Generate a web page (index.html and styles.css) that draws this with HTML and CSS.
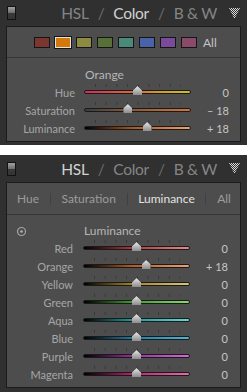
FILE: index.html
```html
<!DOCTYPE html>
<html>
<head>
<meta charset="utf-8">
<link rel="stylesheet" href="styles.css">
</head>
<body>
<section class="panel panel-color">
  <header class="ph">
    <span class="toggle"></span>
    <nav class="modes">
      <span class="mode">HSL</span><span class="slash">/</span><span class="mode on">Color</span><span class="slash">/</span><span class="mode">B &amp; W</span>
    </nav>
    <svg class="tri" width="11" height="11" viewBox="0 0 11 11"><defs><pattern id="dotsA" width="2" height="2" patternUnits="userSpaceOnUse"><rect width="1" height="1" fill="#dcdcdc"/><rect x="1" y="1" width="1" height="1" fill="#dcdcdc"/></pattern></defs><polygon points="0,0 11,0 5.5,11" fill="url(#dotsA)"/></svg>
  </header>
  <div class="box">
    <div class="swatches">
      <span class="sw sw-red"></span>
      <span class="sw sw-orange sel"></span>
      <span class="sw sw-yellow"></span>
      <span class="sw sw-green"></span>
      <span class="sw sw-aqua"></span>
      <span class="sw sw-blue"></span>
      <span class="sw sw-purple"></span>
      <span class="sw sw-magenta"></span>
      <span class="all">All</span>
    </div>
    <div class="sliders s1">
      <div class="sect"><span></span><span class="sect-t">Orange</span></div>
      <div class="row"><span class="lbl">Hue</span><div class="track t-hue"><span class="thumb" style="--v:0"></span></div><span class="val">0</span></div>
      <div class="row"><span class="lbl">Saturation</span><div class="track t-sat"><span class="thumb" style="--v:-18"></span></div><span class="val">– 18</span></div>
      <div class="row"><span class="lbl">Luminance</span><div class="track t-lum"><span class="thumb" style="--v:18"></span></div><span class="val">+ 18</span></div>
    </div>
  </div>
</section>

<section class="panel panel-lum">
  <header class="ph">
    <span class="toggle"></span>
    <nav class="modes">
      <span class="mode on">HSL</span><span class="slash">/</span><span class="mode">Color</span><span class="slash">/</span><span class="mode">B &amp; W</span>
    </nav>
    <svg class="tri" width="11" height="11" viewBox="0 0 11 11"><defs><pattern id="dotsB" width="2" height="2" patternUnits="userSpaceOnUse"><rect width="1" height="1" fill="#dcdcdc"/><rect x="1" y="1" width="1" height="1" fill="#dcdcdc"/></pattern></defs><polygon points="0,0 11,0 5.5,11" fill="url(#dotsB)"/></svg>
  </header>
  <div class="box">
    <div class="tabs">
      <span>Hue</span><span class="sep"></span><span>Saturation</span><span class="sep"></span><span class="on">Luminance</span><span class="sep"></span><span>All</span>
    </div>
    <div class="sliders s2">
      <div class="sect"><svg class="target" width="11" height="11" viewBox="0 0 11 11"><circle cx="5.5" cy="5.5" r="4" fill="none" stroke="#a4a4a4" stroke-width="1.2"/><circle cx="5.5" cy="5.5" r="1.3" fill="#b4b4b4"/></svg><span class="sect-t">Luminance</span></div>
      <div class="row"><span class="lbl">Red</span><div class="track l-red"><span class="thumb" style="--v:0"></span></div><span class="val">0</span></div>
      <div class="row"><span class="lbl">Orange</span><div class="track l-orange"><span class="thumb" style="--v:18"></span></div><span class="val">+ 18</span></div>
      <div class="row"><span class="lbl">Yellow</span><div class="track l-yellow"><span class="thumb" style="--v:0"></span></div><span class="val">0</span></div>
      <div class="row"><span class="lbl">Green</span><div class="track l-green"><span class="thumb" style="--v:0"></span></div><span class="val">0</span></div>
      <div class="row"><span class="lbl">Aqua</span><div class="track l-aqua"><span class="thumb" style="--v:0"></span></div><span class="val">0</span></div>
      <div class="row"><span class="lbl">Blue</span><div class="track l-blue"><span class="thumb" style="--v:0"></span></div><span class="val">0</span></div>
      <div class="row"><span class="lbl">Purple</span><div class="track l-purple"><span class="thumb" style="--v:0"></span></div><span class="val">0</span></div>
      <div class="row"><span class="lbl">Magenta</span><div class="track l-magenta"><span class="thumb" style="--v:0"></span></div><span class="val">0</span></div>
    </div>
  </div>
</section>
</body>
</html>
```

FILE: styles.css
```css
* { box-sizing: border-box; margin: 0; padding: 0; }
html, body { background: #ffffff; }
body { width: 247px; font-family: Lato, "Open Sans", sans-serif; }

.panel { background: #303030; padding: 0 6px 3px; }
.panel-lum { margin-top: 10px; padding-bottom: 4px; }

.ph { height: 26px; display: flex; align-items: center; }
.panel-lum .ph { height: 27px; }

.toggle {
  width: 9px; height: 14px; margin-left: 1px;
  border: 1px solid #121212;
  background: linear-gradient(#a0a0a0 0, #6c6c6c 50%, #3a3a3a 50%, #343434 100%);
}

.modes {
  margin-left: auto; display: flex; align-items: center; gap: 9px;
  font-size: 15.5px; color: #858585; letter-spacing: -0.3px;
}
.modes .on { color: #d2d2d2; }
.modes .slash { color: #6a6a6a; }

.tri { margin-left: 12px; margin-right: 1px; }

.box { background: #4d4d4d; border: 1px solid #1b1b1b; }

.swatches {
  height: 31px; display: flex; align-items: center; gap: 5px;
  padding-left: 27px; border-bottom: 1px solid #353535;
}
.sw { width: 16px; height: 11px; border: 1px solid #151515; }
.sw.sel { border-color: #e2e2e2; box-shadow: 0 0 0 1px #151515; }
.sw-red { background: #7b3630; }
.sw-orange { background: #d4780c; }
.sw-yellow { background: #8d8a42; }
.sw-green { background: #596f38; }
.sw-aqua { background: #4a8a79; }
.sw-blue { background: #4a63a8; }
.sw-purple { background: #7a4a9b; }
.sw-magenta { background: #8a4a6a; }
.all { margin-left: 1px; font-size: 12px; color: #c4c4c4; }

.tabs {
  height: 32px; display: flex; align-items: center; justify-content: space-between;
  padding: 0 9px 0 10px; border-bottom: 1px solid #353535;
  font-size: 12px; color: #9c9c9c;
}
.tabs .on { color: #e2e2e2; }
.tabs .sep { width: 1px; height: 12px; background: #404040; }

.sliders { padding: 7px 0 4px; }
.sliders.s2 { padding-top: 6px; }

.sect, .row {
  display: grid; grid-template-columns: 68px 107px 1fr; column-gap: 9px;
  align-items: center; height: 18px; padding-right: 11px;
}
.s2 .sect, .s2 .row { grid-template-columns: 66px 107px 1fr; column-gap: 10px; padding-right: 12px; }

.sect-t { font-size: 12px; color: #b6b6b6; padding-left: 1px; }
.s2 .sect-t { padding-left: 1px; }
.target { margin-left: 9px; margin-top: 3px; }

.lbl { text-align: right; font-size: 11px; color: #a6a6a6; }
.val { text-align: right; font-size: 11px; color: #c6c6c6; }

.track {
  position: relative; height: 4px; border: 1px solid #1a1a1a; border-radius: 2px;
}
.track::before {
  content: ""; position: absolute; left: 9.7px; top: -7px; width: 86.6px; height: 3px;
  background: linear-gradient(to right, #383838 1px, transparent 1px) 0 0 / 10.7px 100% repeat-x;
}
.thumb {
  position: absolute; top: -5px; width: 9px; height: 9px;
  left: calc(50% - 4.5px + var(--v) * 0.535px);
  filter: drop-shadow(0 0 0.6px #111) drop-shadow(0 0.5px 0.5px rgba(0,0,0,0.5));
}
.thumb::before {
  content: ""; display: block; width: 9px; height: 9px;
  clip-path: polygon(50% 0, 100% 48%, 100% 100%, 0 100%, 0 48%);
  background: linear-gradient(#ececec, #b4b4b4 55%, #8c8c8c);
}

.t-hue { background: linear-gradient(to right, #d42a62, #de6a36 48%, #d49a2a 70%, #c8c420); }
.t-sat { background: linear-gradient(to right, #3c3c3c, #8e5a3a 45%, #d07638); }
.t-lum { background: linear-gradient(to right, #000, #a8561e 45%, #f0a070); }

.l-red { background: linear-gradient(to right, #000, #a83838 45%, #e48a8a); }
.l-orange { background: linear-gradient(to right, #000, #b05a1e 45%, #eea078); }
.l-yellow { background: linear-gradient(to right, #000, #a48420 45%, #dcc47a); }
.l-green { background: linear-gradient(to right, #000, #3c9a2c 45%, #8cd870); }
.l-aqua { background: linear-gradient(to right, #000, #1c9a98 45%, #64d6d4); }
.l-blue { background: linear-gradient(to right, #000, #1c7aa4 45%, #4cb6d8); }
.l-purple { background: linear-gradient(to right, #000, #982c9c 45%, #d46ad8); }
.l-magenta { background: linear-gradient(to right, #000, #b82072 45%, #e86aa8); }
```
